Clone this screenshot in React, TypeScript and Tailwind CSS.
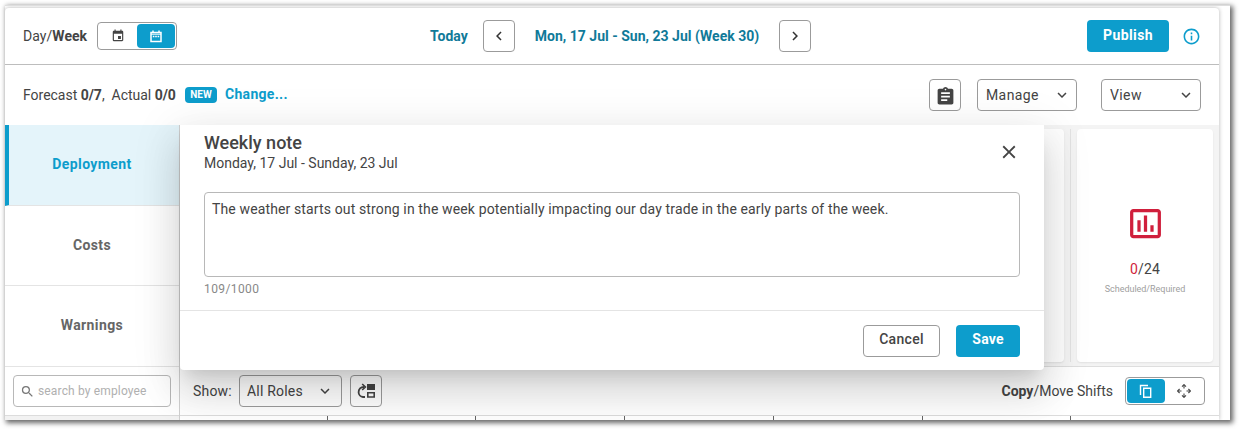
import { MdAssignment, MdChevronLeft, MdChevronRight, MdClose, MdEvent, MdInfoOutline, MdInsertChartOutlined, MdKeyboardArrowDown, MdSearch } from "react-icons/md";

const tabs = [
    { label: "Deployment", style: "h-[81px] border-l-4 border-l-[#0d9dcc] bg-[#e4f4fa] text-[#0d9dcc] pr-1" },
    { label: "Costs", style: "h-20 text-[#666]" },
    { label: "Warnings", style: "h-[81px] text-[#666]" },
];

const Select = ({ label, className }: { label: string; className: string }) => (
    <button className={`flex items-center justify-between h-8 border border-[#9b9b9b] rounded ${className}`}>
        <span>{label}</span>
        <MdKeyboardArrowDown size={18} />
    </button>
);

const WeekIcon = () => (
    <svg width="12" height="13" viewBox="0 0 12 13" fill="none" stroke="currentColor">
        <path d="M1 2.5h10v9H1z" strokeWidth="1.5" />
        <path d="M3 .5v2M9 .5v2" strokeWidth="1.5" />
        <path d="M1 4.2h10" strokeWidth="1" />
        <path d="M2.8 6.5h6.6" strokeWidth="1.6" strokeDasharray="1.6 .8" />
    </svg>
);

const CopyIcon = () => (
    <svg width="14" height="15" viewBox="0 0 14 15" fill="none" stroke="currentColor" strokeWidth="1.4">
        <path d="M1.5 11V1.5H9" />
        <path d="M4.7 4.3h7v9h-7z" />
    </svg>
);

const SwapIcon = () => (
    <svg width="18" height="16" viewBox="0 0 18 16" fill="none" stroke="#444" strokeWidth="1.8">
        <path d="M8 14H6A4.8 4.8 0 0 1 1.6 9.2C1.6 6 3.6 4 7 4" />
        <path d="M5.2 1l3.2 3-3.2 3" strokeWidth="1.6" />
        <path d="M10 1h8v6h-8z" fill="#444" stroke="none" />
        <path d="M10.8 9.8h6.4v4.2h-6.4z" strokeWidth="1.6" />
    </svg>
);

const MoveIcon = () => (
    <svg width="14" height="14" viewBox="0 0 14 14" fill="none" stroke="#444" strokeWidth="1.1">
        <path d="M7 4.5V1M7 9.5V13M4.5 7H1M9.5 7H13" />
        <path d="M5 2.6l2-2 2 2M5 11.4l2 2 2-2M2.6 5l-2 2 2 2M11.4 5l2 2-2 2" />
    </svg>
);

const TopBar = () => (
    <header className="flex items-center h-[57px] border-b border-[#bdbdbd] pl-[18px] pr-[18px]">
        <div className="w-[407px] flex items-center">
            <span className="w-[74px] tracking-[0.05px]">Day/<b className="font-bold">Week</b></span>
            <div className="flex w-20 h-7 p-px border border-[#9b9b9b] rounded">
                <span className="flex-1 flex items-center justify-center"><MdEvent size={14} /></span>
                <span className="flex-1 flex items-center justify-center rounded bg-[#0d9dcc] text-white"><WeekIcon /></span>
            </div>
        </div>
        <div className="flex items-center text-[#107a99] font-bold tracking-[0.01px]">
            <span className="w-[53px]">Today</span>
            <button className="flex items-center justify-center size-8 border border-[#9b9b9b] rounded text-[#333]"><MdChevronLeft size={18} /></button>
            <span className="w-[264px] text-center">Mon, 17 Jul - Sun, 23 Jul (Week 30)</span>
            <button className="flex items-center justify-center size-8 border border-[#9b9b9b] rounded text-[#333]"><MdChevronRight size={18} /></button>
        </div>
        <div className="ml-auto flex items-center gap-[13px] text-[#0d9dcc]">
            <button className="w-[82px] h-8 pb-0.5 rounded bg-[#0d9dcc] text-white font-bold tracking-[0.4px]">Publish</button>
            <MdInfoOutline size={19} />
        </div>
    </header>
);

const ForecastBar = () => (
    <div className="flex items-center h-[60px] pl-[18px] pr-[18px]">
        <span className="w-[162px] whitespace-nowrap tracking-[-0.02px]">Forecast <b>0/7</b>,&nbsp; Actual <b>0/0</b></span>
        <span className="w-8 h-4 rounded-sm bg-[#0d9dcc] text-white text-[10px] leading-4 font-bold text-center tracking-normal">NEW</span>
        <a className="ml-2 mb-0.5 font-bold tracking-[0.3px] text-[#0d9dcc]">Change...</a>
        <div className="ml-auto flex items-center">
            <button className="flex items-center justify-center size-8 pt-0.5 border border-[#9b9b9b] rounded"><MdAssignment size={21} /></button>
            <Select label="Manage" className="ml-4 w-[100px] pl-2 pr-[5px] tracking-[0.4px]" />
            <Select label="View" className="ml-6 w-[100px] pl-2 pr-[5px] tracking-[0.4px]" />
        </div>
    </div>
);

const WeeklyNote = () => (
    <section className="absolute left-[175px] top-[117px] w-[864px] h-[245px] bg-white rounded-b-sm shadow-[0_11px_15px_-7px_rgba(0,0,0,0.12),0_24px_38px_3px_rgba(0,0,0,0.10),0_9px_46px_8px_rgba(0,0,0,0.08)]">
        <div className="h-[186px] px-6 border-b border-[#e4e4e4]">
            <div className="flex justify-between h-[67px] pt-2">
                <div>
                    <h2 className="text-lg leading-5 font-medium tracking-normal">Weekly note</h2>
                    <p className="leading-5 tracking-normal">Monday, 17 Jul - Sunday, 23 Jul</p>
                </div>
                <MdClose size={22} className="mt-2" />
            </div>
            <p className="h-[85px] border border-[#b8b8b8] rounded px-[7px] pt-1.5 leading-5 tracking-[0.13px]">The weather starts out strong in the week potentially impacting our day trade in the early parts of the week.</p>
            <p className="mt-1 text-xs leading-4 tracking-[0.4px] text-[#888]">109/1000</p>
        </div>
        <div className="flex justify-end gap-4 pt-3.5 pr-6">
            <button className="w-[77px] h-8 pb-1 border border-[#9b9b9b] rounded font-medium tracking-[0.3px]">Cancel</button>
            <button className="w-16 h-8 pb-1 rounded bg-[#0d9dcc] text-white font-bold">Save</button>
        </div>
    </section>
);

const App = () => {
    return (
        <div className="w-[1239px] h-[429px] overflow-hidden bg-white pl-[5px] pt-[5px] font-[Roboto,sans-serif] text-sm tracking-[0.2px] text-[#444]">
            <div className="w-[1225px] h-[415px] shadow-[2px_2px_5px_1px_rgba(0,0,0,0.6)]">
                <div className="h-full overflow-hidden bg-white border-t border-[#dedede] pt-0.5">
                    <div className="relative w-[1214px] h-[412px] rounded-t bg-white shadow-[0_0_4px_rgba(0,0,0,0.3)]">
                        <TopBar />
                        <ForecastBar />
                        <div className="flex">
                            <aside className="w-[175px] border-r border-[#d0d0d0]">
                                {tabs.map((tab) => (
                                    <div key={tab.label} className={`flex items-center justify-center border-b border-b-[#e4e4e4] pb-0.5 font-bold tracking-[0.4px] ${tab.style}`}>{tab.label}</div>
                                ))}
                                <div className="h-[49px] border-b border-[#dcdcdc] px-2 pt-2">
                                    <div className="flex items-center h-8 w-[158px] border border-[#b8b8b8] rounded pl-1.5 gap-[3px] text-xs tracking-[0.15px] text-[#b0b0b0]">
                                        <MdSearch size={15} className="text-[#777]" />
                                        <span>search by employee</span>
                                    </div>
                                </div>
                                <div className="h-1 bg-[#f2f2f2]" />
                            </aside>
                            <main className="flex-1">
                                <div className="flex h-[242px] border-b border-[#dedede] bg-[#f4f4f4] pt-1 pb-1 pr-1.5">
                                    <div className="flex-1 mr-1.5 rounded bg-white shadow-[0_1px_2px_rgba(0,0,0,0.08)]" />
                                    <div className="w-px bg-[#e2e2e2]" />
                                    <div className="ml-1.5 w-[136px] flex flex-col items-center rounded bg-white pt-[75px] shadow-[0_1px_2px_rgba(0,0,0,0.08)]">
                                        <MdInsertChartOutlined size={39} className="text-[#d01f3c]" />
                                        <p className="mt-4 leading-5"><span className="text-[#d01f3c]">0</span>/24</p>
                                        <p className="mt-0.5 text-[9px] leading-4 tracking-[-0.02px] text-[#a0a0a0]">Scheduled/Required</p>
                                    </div>
                                </div>
                                <div className="flex items-center h-[49px] border-b border-[#dcdcdc] pl-[13px] pr-3.5">
                                    <span className="w-[46px]">Show:</span>
                                    <Select label="All Roles" className="w-[103px] pl-[7px] pr-[7px]" />
                                    <button className="ml-2 flex items-center justify-center size-8 border border-[#9b9b9b] rounded"><SwapIcon /></button>
                                    <span className="ml-auto tracking-normal"><b>Copy</b>/Move Shifts</span>
                                    <div className="ml-3 flex w-20 h-7 p-px border border-[#9b9b9b] rounded bg-white">
                                        <span className="flex-1 flex items-center justify-center rounded bg-[#0d9dcc] text-white"><CopyIcon /></span>
                                        <span className="flex-1 flex items-center justify-center"><MoveIcon /></span>
                                    </div>
                                </div>
                                <div className="flex h-1">
                                    <div className="w-[148px] border-r border-[#666]" />
                                    <div className="w-[148px] border-r border-[#666]" />
                                    <div className="w-[149px] border-r border-[#666]" />
                                    <div className="w-[149px] border-r border-[#666]" />
                                    <div className="w-[149px] border-r border-[#666]" />
                                    <div className="w-[148px] border-r border-[#666]" />
                                </div>
                            </main>
                        </div>
                        <WeeklyNote />
                    </div>
                </div>
            </div>
        </div>
    );
};

export default App;
